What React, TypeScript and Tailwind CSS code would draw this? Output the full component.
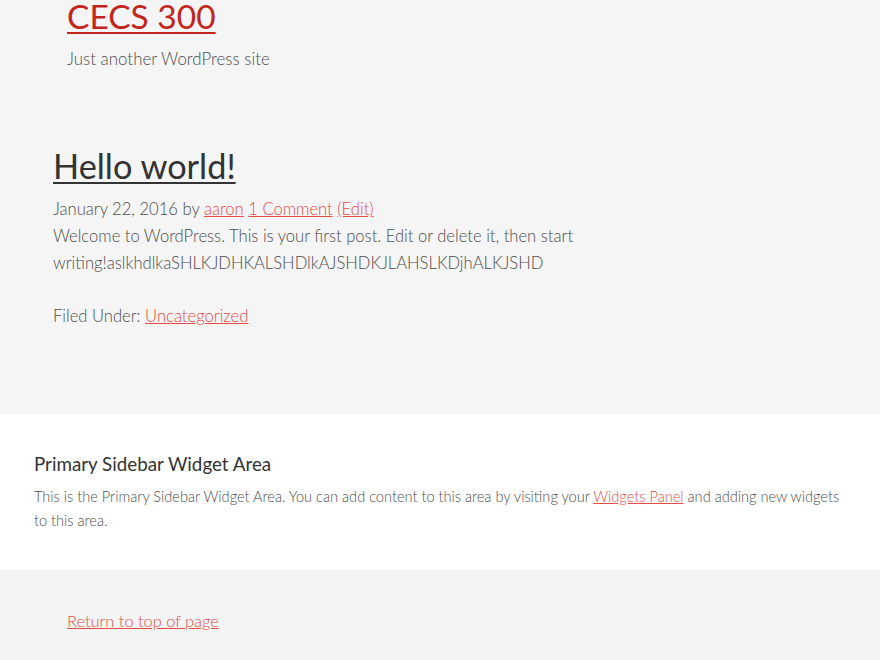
export default function App() {
  return (
    <div className="min-h-screen bg-[#f5f5f5] font-['Lato','Liberation_Sans',sans-serif] text-[#333]">
      <header className="pl-[67px]">
        <p className="text-[33.5px] leading-[32px]">
          <a href="#" className="text-[#c3251d] underline decoration-[2px] underline-offset-[3px]">CECS 300</a>
        </p>
        <p className="mt-[14px] text-[16.9px] font-light leading-[26px] text-[#4d4d4d]">Just another WordPress site</p>
      </header>

      <main className="pl-[53px] pt-[72px] pb-[84px]">
        <article>
          <h1 className="text-[34.3px] leading-[43px]">
            <a href="#" className="text-[#333] underline decoration-[2px] underline-offset-[3px]">Hello world!</a>
          </h1>
          <p className="mt-[9px] text-[16.6px] font-light leading-[27px] text-[#4d4d4d]">
            January 22, 2016 by{' '}
            <a href="#" className="text-[#e24e47] underline">aaron</a>{' '}
            <a href="#" className="text-[#e24e47] underline">1 Comment</a>{' '}
            <a href="#" className="text-[#e24e47] underline">(Edit)</a>
          </p>
          <div className="max-w-[540px] text-[16.6px] font-light leading-[27px] text-[#4d4d4d]">
            <p>Welcome to WordPress. This is your first post. Edit or delete it, then start writing!aslkhdlkaSHLKJDHKALSHDlkAJSHDKJLAHSLKDjhALKJSHD</p>
          </div>
          <p className="mt-[26px] text-[16.6px] font-light leading-[27px] text-[#4d4d4d]">
            Filed Under: <a href="#" className="text-[#e24e47] underline">Uncategorized</a>
          </p>
        </article>
      </main>

      <aside className="bg-white px-[34px] pt-[39px] pb-[37px]">
        <h4 className="text-[18.8px] leading-[1.2] text-[#333]">Primary Sidebar Widget Area</h4>
        <p className="mt-[9px] text-[14.6px] font-light leading-[24px] text-[#4d4d4d]">
          This is the Primary Sidebar Widget Area. You can add content to this area by visiting your{' '}
          <a href="#" className="text-[#e24e47] underline">Widgets Panel</a> and adding new widgets to this area.
        </p>
      </aside>

      <footer className="bg-[#f4f4f4] pl-[67px] pt-[38px] pb-[41px]">
        <p className="text-[16.4px] font-light leading-[26px]">
          <a href="#" className="text-[#e24e47] underline">Return to top of page</a>
        </p>
      </footer>
    </div>
  )
}
